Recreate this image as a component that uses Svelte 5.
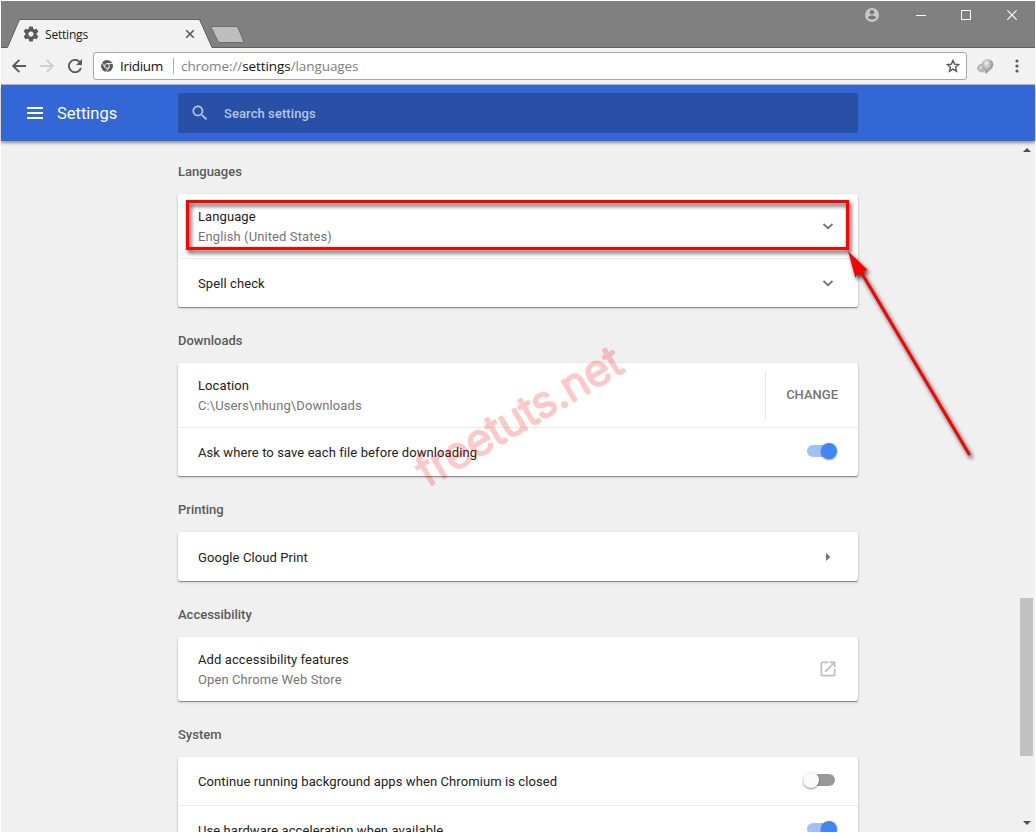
<script>
  const sections = [
    {
      title: 'Languages',
      rows: [
        { label: 'Language', sub: 'English (United States)', control: 'expand' },
        { label: 'Spell check', control: 'expand' }
      ]
    },
    {
      title: 'Downloads',
      rows: [
        { label: 'Location', sub: 'C:\\Users\\nhung\\Downloads', control: 'change' },
        { label: 'Ask where to save each file before downloading', control: 'on' }
      ]
    },
    { title: 'Printing', rows: [{ label: 'Google Cloud Print', control: 'arrow' }] },
    {
      title: 'Accessibility',
      rows: [{ label: 'Add accessibility features', sub: 'Open Chrome Web Store', control: 'open' }]
    },
    {
      title: 'System',
      rows: [
        { label: 'Continue running background apps when Chromium is closed', control: 'off' },
        { label: 'Use hardware acceleration when available', control: 'on' }
      ]
    }
  ];
</script>

<div class="window">
  <div class="titlebar">
    <svg class="tabs" width="260" height="30" viewBox="0 0 260 30">
      <path d="M0 28.5H6.5L18.5 .5H198.5L211 28.5H260V30H0Z" fill="#f2f2f2" />
      <path d="M0 28.5H6.5L18.5 .5H198.5L211 28.5H260" fill="none" stroke="#5f5f5f" />
      <path d="M211 7.500H235Q236.500 7.500 237.200 9L242.500 22Q243 23.500 241.500 23.500H219.500Q217.500 23.500 216.800 22L210.500 9Q210 7.500 211 7.500Z" fill="#bebebe" stroke="#6c6c6c" />
    </svg>
    <div class="tab">
      <svg width="18" height="18" viewBox="0 0 24 24" fill="#5a5a5a"><path d="M19.43 12.98c.04-.32.07-.64.07-.98s-.03-.66-.07-.98l2.110-1.650c.19-.15.24-.42.12-.64l-2-3.460c-.12-.22-.39-.3-.61-.22l-2.490 1c-.52-.4-1.080-.73-1.690-.98l-.38-2.650C14.460 2.180 14.250 2 14 2h-4c-.25 0-.46.18-.49.42l-.38 2.650c-.61.25-1.170.59-1.690.98l-2.490-1c-.23-.09-.49 0-.61.22l-2 3.460c-.13.22-.07.49.12.64l2.110 1.650c-.04.32-.07.65-.07.98s.03.66.07.98l-2.110 1.650c-.19.15-.24.42-.12.64l2 3.460c.12.22.39.3.61.22l2.490-1c.52.4 1.080.73 1.690.98l.38 2.650c.03.24.24.42.49.42h4c.25 0 .46-.18.49-.42l.38-2.650c.61-.25 1.170-.59 1.690-.98l2.490 1c.23.09.49 0 .61-.22l2-3.460c.12-.22.07-.49-.12-.64l-2.110-1.650zM12 15.500c-1.930 0-3.500-1.570-3.500-3.500s1.570-3.500 3.500-3.500 3.500 1.570 3.500 3.500-1.570 3.500-3.500 3.500z" /></svg>
      <span>Settings</span>
      <svg class="close" width="10" height="10" viewBox="0 0 10 10"><path d="M1.200 1.200L8.800 8.800M8.800 1.200L1.200 8.800" stroke="#5a5a5a" stroke-width="1.600" /></svg>
    </div>
    <div class="controls">
      <svg width="14" height="14" viewBox="0 0 14 14"><circle cx="7" cy="7" r="7" fill="#c8c8c8" /><circle cx="7" cy="4.200" r="2.200" fill="#777" /><path d="M2.800 9.600Q3.600 7.600 7 7.600T11.200 9.600Q9.800 11.600 7 11.600T2.800 9.600Z" fill="#777" /></svg>
      <svg width="10" height="10" viewBox="0 0 10 10"><path d="M0 5.500H10" stroke="#fff" /></svg>
      <svg width="10" height="10" viewBox="0 0 10 10"><path d="M.5 .5H9.500V9.500H.5Z" fill="none" stroke="#fff" /></svg>
      <svg width="10" height="10" viewBox="0 0 10 10"><path d="M0 0L10 10M10 0L0 10" stroke="#fff" stroke-width="1.200" /></svg>
    </div>
  </div>

  <div class="toolbar">
    <svg width="14" height="14" viewBox="0 0 14 14"><path d="M14 7H1.500M7.400 .8L1.200 7L7.400 13.200" fill="none" stroke="#5a5a5a" stroke-width="1.900" /></svg>
    <svg width="14" height="14" viewBox="0 0 14 14"><path d="M0 7H12.500M6.600 .8L12.800 7L6.600 13.200" fill="none" stroke="#d0d0d0" stroke-width="1.900" /></svg>
    <svg width="14" height="14" viewBox="0 0 14 14"><path d="M12.900 9.200A6.200 6.200 0 1 1 11.600 2.800" fill="none" stroke="#5a5a5a" stroke-width="1.900" /><path d="M14 0V6H8Z" fill="#5a5a5a" /></svg>
    <div class="omnibox">
      <svg width="12" height="12" viewBox="0 0 12 12"><circle cx="6" cy="6" r="6" fill="#5a5a5a" /><circle cx="6" cy="6" r="2.400" fill="none" stroke="#fff" stroke-width=".9" /><path d="M6 3.500H11.500M3.800 7.200L1 2.700M8.200 7.200L5.300 12" stroke="#fff" stroke-width=".8" /></svg>
      <span class="origin">Iridium</span>
      <span class="url">chrome://<b>settings</b>/languages</span>
      <svg class="star" width="14" height="14" viewBox="0 0 14 14"><path d="M7 1.500L8.600 5.100L12.600 5.500L9.600 8.200L10.500 12.200L7 10.100L3.500 12.200L4.400 8.200L1.400 5.500L5.400 5.100Z" fill="none" stroke="#5a5a5a" stroke-width="1.400" /></svg>
    </div>
    <svg class="ext" width="17" height="15" viewBox="0 0 17 15">
      <defs><radialGradient id="ball" cx=".4" cy=".3" r=".7"><stop offset="0" stop-color="#f2f2f2" /><stop offset=".5" stop-color="#b4b4b4" /><stop offset="1" stop-color="#7c7c7c" /></radialGradient></defs>
      <ellipse cx="6" cy="9" rx="6" ry="4.500" fill="#b8b8b8" /><path d="M3 10Q3.500 6 6 8T8 13" fill="none" stroke="#ececec" />
      <path d="M10.500 0A5.700 5.500 0 0 1 16.200 5.500C16.200 10 12 11 9 15C9 12 5 9.500 5 5.500A5.500 5.500 0 0 1 10.500 0Z" fill="url(#ball)" />
    </svg>
    <svg class="dots" width="4" height="14" viewBox="0 0 4 14" fill="#5a5a5a"><circle cx="2" cy="2" r="1.600" /><circle cx="2" cy="7" r="1.600" /><circle cx="2" cy="12" r="1.600" /></svg>
  </div>

  <header>
    <svg class="menu" width="16" height="12" viewBox="0 0 16 12"><path d="M0 1H16M0 6H16M0 11H16" stroke="#fff" stroke-width="2" /></svg>
    <h1>Settings</h1>
    <div class="search">
      <svg width="20" height="20" viewBox="0 0 24 24" fill="#b6c5e6"><path d="M15.500 14h-.79l-.28-.27C15.410 12.590 16 11.110 16 9.500 16 5.910 13.090 3 9.500 3S3 5.910 3 9.500 5.910 16 9.500 16c1.610 0 3.090-.59 4.230-1.570l.27.28v.79l5 4.990L20.490 19l-4.990-5zm-6 0C7.010 14 5 11.990 5 9.500S7.010 5 9.500 5 14 7.010 14 9.500 11.990 14 9.500 14z" /></svg>
      <span>Search settings</span>
    </div>
  </header>

  <main>
    <div class="content">
      {#each sections as section}
        <section>
          <h2>{section.title}</h2>
          <div class="card">
            {#each section.rows as row}
              <div class="row" class:two={row.sub}>
                <div class="text">
                  <div>{row.label}</div>
                  {#if row.sub}<div class="sub">{row.sub}</div>{/if}
                </div>
                {#if row.control === 'expand'}
                  <svg width="20" height="20" viewBox="0 0 20 20"><path d="M5.500 8L10 12.200L14.500 8" fill="none" stroke="#757575" stroke-width="1.800" /></svg>
                {:else if row.control === 'arrow'}
                  <svg width="20" height="20" viewBox="0 0 20 20"><path d="M8 6L12.500 10L8 14Z" fill="#757575" /></svg>
                {:else if row.control === 'open'}
                  <svg width="20" height="20" viewBox="0 0 24 24" fill="#bdbdbd"><path d="M19 19H5V5h7V3H5c-1.110 0-2 .9-2 2v14c0 1.100.89 2 2 2h14c1.100 0 2-.9 2-2v-7h-2v7zM14 3v2h3.590l-9.830 9.830 1.410 1.410L19 6.410V10h2V3h-7z" /></svg>
                {:else if row.control === 'change'}
                  <div class="change">CHANGE</div>
                {:else}
                  <div class="toggle" class:on={row.control === 'on'}><i></i></div>
                {/if}
              </div>
            {/each}
          </div>
        </section>
      {/each}
    </div>
    <div class="scrollbar">
      <svg width="8" height="4" viewBox="0 0 8 4"><path d="M0 4L4 0L8 4Z" fill="#505050" /></svg>
      <div class="thumb"></div>
      <svg width="8" height="4" viewBox="0 0 8 4"><path d="M0 0L4 4L8 0Z" fill="#505050" /></svg>
    </div>
  </main>

  <svg class="overlay" width="1036" height="833" viewBox="0 0 1036 833">
    <g opacity=".21" transform="translate(427.500 487.500) rotate(-30.500)">
      <text x="0" y="0" textLength="230" lengthAdjust="spacingAndGlyphs" class="mark">freetuts.net</text>
    </g>
    <g class="note">
      <rect x="187.500" y="201.500" width="660" height="47" fill="none" stroke="#f00" stroke-width="3" />
      <path d="M969 454L861 272" stroke="#f00" stroke-width="3" stroke-linecap="round" />
      <path d="M848 251L867.500 270L860.500 272L855.300 277.500Z" fill="#f00" />
    </g>
  </svg>
</div>

<style>
  :global(body) { margin: 0; background: #fff; overflow: hidden; }
  .window { box-sizing: border-box; position: relative; width: 1036px; height: 833px; padding: 1px; display: flex; flex-direction: column; overflow: hidden; background: #fff; font-family: Roboto, sans-serif; font-size: 13px; }
  svg { display: block; flex: none; }
  .titlebar { height: 47px; flex: none; background: #808080; display: flex; align-items: flex-end; position: relative; box-shadow: inset 0 -1px #5f5f5f; }
  .tabs { position: absolute; left: 0; bottom: -1px; }
  .tab { position: relative; width: 173px; height: 18px; margin: 0 0 5px 21px; display: flex; align-items: center; font: 12px "Open Sans", sans-serif; color: #222; }
  .tab span { margin-left: 5px; letter-spacing: -.2px; }
  .tab .close { margin-left: auto; }
  .controls { display: flex; align-items: center; height: 14px; margin: 0 18px 26px auto; gap: 36px; }
  .controls svg:nth-child(1) { margin-right: 1px; }
  .controls svg:nth-child(3) { margin-left: -1px; }
  .toolbar { height: 36px; flex: none; background: #f2f2f2; border-bottom: 1px solid #b5b5b5; display: flex; align-items: center; padding: 0 15px 0 11px; gap: 14px; }
  .omnibox { flex: 1; margin: 0 -4px 0 -3px; height: 26px; border: 1px solid #a8a8a8; border-radius: 3px; background: #fff; display: flex; align-items: center; padding: 0 6px 0 7px; font: 14px "Open Sans", sans-serif; color: #111; }
  .origin { margin-left: 7px; width: 53px; border-right: 1px solid #aaa; line-height: 16px; font-size: 13.500px; letter-spacing: -.3px; }
  .url { margin-left: 7px; color: #808080; font-size: 13.500px; letter-spacing: -.08px; }
  .url b { font-weight: 400; color: #111; }
  .star { margin-left: auto; }
  .dots { margin-left: 7px; margin-right: 1px; }
  header { height: 56px; flex: none; background: #3367d6; color: #fff; display: flex; align-items: center; padding-left: 26px; position: relative; box-shadow: 0 2px 3px rgba(0, 0, 0, .4); }
  h1 { margin: 0 0 0 14px; width: 121px; font-size: 16.500px; font-weight: 400; }
  .search { width: 680px; height: 40px; border-radius: 2px; background: #2850a7; display: flex; align-items: center; padding-left: 12px; box-sizing: border-box; color: #b6c5e6; font-weight: 500; }
  .search span { margin-left: 14px; letter-spacing: .08px; }
  main { flex: 1; min-height: 0; background: #f0f0f0; display: flex; justify-content: space-between; overflow: hidden; }
  .content { width: 680px; margin-left: 177px; }
  section { padding-top: 20px; }
  section:first-child { padding-top: 17px; }
  h2 { margin: 0; height: 20px; padding-bottom: 16px; line-height: 28px; font-size: 13px; font-weight: 500; color: #5a5a5a; }
  .card { border-radius: 2px; background: #fff; box-shadow: 0 1px 1px rgba(0, 0, 0, .35), 0 1px 3px rgba(0, 0, 0, .2); }
  .row { display: flex; align-items: center; justify-content: space-between; height: 48px; padding: 0 20px; color: #212121; }
  .row:only-child:not(.two) { height: 49px; }
  .row.two { height: 64px; }
  .row + .row { border-top: 1px solid #ebebeb; }
  .text { line-height: 20px; padding-top: 2px; letter-spacing: .09px; }
  .sub { color: #757575; letter-spacing: .1px; }
  .change { border-left: 1px solid #e4e4e4; padding-left: 20px; height: 46px; line-height: 46px; font-weight: 500; color: #757575; }
  .toggle { width: 28px; height: 12px; border-radius: 6px; background: #999; margin: 0 3px 2px 0; display: flex; align-items: center; }
  .toggle i { width: 16px; height: 16px; flex: none; border-radius: 50%; background: #fafafa; margin-left: -4px; box-shadow: 0 1px 2px rgba(0, 0, 0, .45); }
  .toggle.on { background: #a0c0fb; }
  .toggle.on i { background: #4285f4; margin-left: 14px; }
  .scrollbar { width: 17px; box-sizing: border-box; padding: 7px 0; display: flex; flex-direction: column; align-items: center; }
  .thumb { width: 13px; height: 158px; background: #c1c1c1; margin: 446px 0 auto; }
  .overlay { position: absolute; left: 0; top: 0; pointer-events: none; }
  .mark { font: 300 43px Inter, "Liberation Sans", sans-serif; fill: #f00; stroke: #f00; stroke-width: 2.500px; stroke-linejoin: round; }
  .note { filter: drop-shadow(2px 3px 2px rgba(0, 0, 0, .75)); }
</style>
